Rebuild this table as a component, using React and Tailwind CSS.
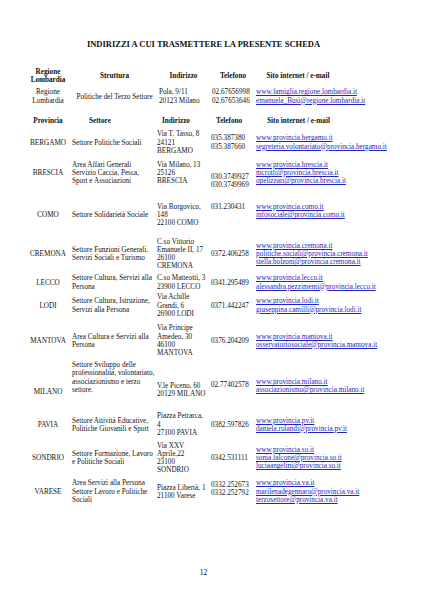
import React from 'react'

// Pagina 12: indirizzi delle province lombarde a cui trasmettere la scheda.
const GRID = 'grid grid-cols-[48px_85px_53px_46px_1fr] items-center'
const LINK = 'text-[#2424c4] underline decoration-[0.5px] underline-offset-[1px]'

const ROWS = [
  {
    mt: 'mt-[5.2px]', h: 'h-[24.6px]', prov: 'BERGAMO',
    settore: ['Settore Politiche Sociali'],
    addr: ['Via T. Tasso, 8', '24121', 'BERGAMO'],
    tel: ['035.387380', '035.387660'],
    web: ['www.provincia.bergamo.it', 'segreteria.volontariato@provincia.bergamo.it'],
  },
  {
    mt: 'mt-[1.9px]', h: 'h-[24.6px]', prov: 'BRESCIA',
    settore: ['Area Affari Generali', 'Servizio Caccia, Pesca,', 'Sport e Associazioni'],
    addr: ['Via Milano, 13', '25126', 'BRESCIA'],
    tel: ['030.3749927', '030.3749969'], telCls: 'pt-[16px]',
    web: ['www.provincia.brescia.it', 'mcrotti@provincia.brescia.it', 'opelizzari@provincia.brescia.it'],
  },
  {
    mt: 'mt-[21.6px]', h: 'h-[24.6px]', prov: 'COMO',
    settore: ['Settore Solidarietà Sociale'],
    addr: ['Via Borgovico,', '148', '22100 COMO'],
    tel: ['031.230431'], telCls: 'self-start',
    web: ['www.provincia.como.it', 'infosociale@provincia.como.it'], webCls: 'self-start',
  },
  {
    mt: 'mt-[10.1px]', h: 'h-[32.8px]', prov: 'CREMONA',
    settore: ['Settore Funzioni Generali,', 'Servizi Sociali e Turismo'],
    addr: ['C.so Vittorio', 'Emanuele II, 17', '26100', 'CREMONA'],
    tel: ['0372.406258'],
    web: ['www.provincia.cremona.it', 'politiche.sociali@provincia.cremona.it', 'stella.bolzoni@provincia.cremona.it'],
  },
  {
    mt: 'mt-[3.9px]', h: 'h-[16.4px]', prov: 'LECCO',
    settore: ['Settore Cultura, Servizi alla', 'Persona'],
    addr: ['C.so Matteotti, 3', '23900 LECCO'],
    tel: ['0341.295489'],
    web: ['www.provincia.lecco.it', 'alessandra.pezzimenti@provincia.lecco.it'],
  },
  {
    mt: 'mt-[2.5px]', h: 'h-[24.6px]', prov: 'LODI',
    settore: ['Settore Cultura, Istruzione,', 'Servizi alla Persona'],
    addr: ['Via Achille', 'Grandi, 6', '26900 LODI'],
    tel: ['0371.442247'],
    web: ['www.provincia.lodi.it', 'giuseppina.camilli@provincia.lodi.it'],
  },
  {
    mt: 'mt-[6.5px]', h: 'h-[32.8px]', prov: 'MANTOVA',
    settore: ['Area Cultura e Servizi alla', 'Persona'],
    addr: ['Via Principe', 'Amedeo, 30', '46100', 'MANTOVA'],
    tel: ['0376.204209'],
    web: ['www.provincia.mantova.it', 'osservatoriosociale@provincia.mantova.it'],
  },
  {
    mt: 'mt-[4px]', h: 'h-[37px]', prov: 'MILANO', provCls: 'pt-[24px]',
    settore: ['Settore Sviluppo delle', 'professionalità, volontariato,', 'associazionismo e terzo', 'settore.'],
    settoreCls: 'self-start',
    addr: ['V.le Piceno, 60', '20129 MILANO'], addrCls: 'pt-[21px]',
    tel: ['02.77402578'], telCls: 'pt-[11px]',
    web: ['www.provincia.milano.it', 'associazionismo@provincia.milano.it'], webCls: 'pt-[13px]',
  },
  {
    mt: 'mt-[14.3px]', h: 'h-[24.6px]', prov: 'PAVIA',
    settore: ['Settore Attività Educative,', 'Politiche Giovanili e Sport'],
    addr: ['Piazza Petrarca,', '4', '27100 PAVIA'],
    tel: ['0382.597826'],
    web: ['www.provincia.pv.it', 'daniela.rolandi@provincia.pv.it'],
  },
  {
    mt: 'mt-[4.6px]', h: 'h-[32.8px]', prov: 'SONDRIO',
    settore: ['Settore Formazione, Lavoro', 'e Politiche Sociali'],
    addr: ['Via XXV', 'Aprile,22', '23100', 'SONDRIO'],
    tel: ['0342.531111'],
    web: ['www.provincia.so.it', 'sonia.falcone@provincia.so.it', 'luciaangelini@provincia.so.it'],
  },
  {
    mt: 'mt-[5px]', h: 'h-[24.6px]', prov: 'VARESE',
    settore: ['Area Servizi alla Persona', 'Settore Lavoro e Politiche', 'Sociali'],
    addr: ['Piazza Libertà, 1', '21100 Varese'],
    tel: ['0332.252673', '0332.252792'], telCls: 'pb-[6px]',
    web: ['www.provincia.va.it', 'marilenadegennaro@provincia.va.it', 'terzosettore@provincia.va.it'],
  },
]

function Lines({ items, className = '', link }) {
  return (
    <div className={`whitespace-nowrap ${className}`}>
      {items.map((t) => (
        <div key={t} className={link ? LINK : ''}>{t}</div>
      ))}
    </div>
  )
}

export default function App() {
  return (
    <div className="min-h-[598px] w-[423px] bg-white pl-[24px] pt-[39px] [font-family:'Liberation_Serif',serif] text-[7.2px] leading-[8.2px] text-[#111]">
      <h1 className="w-[359px] text-center text-[8.5px] font-bold leading-[10px]">
        INDIRIZZI A CUI TRASMETTERE LA PRESENTE SCHEDA
      </h1>

      {/* tabella regione */}
      <div className={`${GRID} mt-[18.6px] h-[16.4px] font-bold`}>
        <div className="text-center">Regione<br />Lombardia</div>
        <div className="text-center">Struttura</div>
        <div className="text-center">Indirizzo</div>
        <div className="text-center">Telefono</div>
        <div className="w-[84px] text-center">Sito internet / e-mail</div>
      </div>
      <div className={`${GRID} mt-[4.5px] h-[16.4px]`}>
        <div className="text-center">Regione<br />Lombardia</div>
        <div className="whitespace-nowrap text-center">Politiche del Terzo Settore</div>
        <Lines className="pl-[2px]" items={['Pola, 9/11', '20123 Milano']} />
        <Lines className="pl-[2px]" items={['02.67656998', '02.67653646']} />
        <Lines link items={['www.famiglia.regione.lombardia.it', 'emanuela_Busi@regione.lombardia.it']} />
      </div>

      {/* tabella province */}
      <div className={`${GRID} mt-[11.3px] h-[9px] font-bold`}>
        <div className="text-center">Provincia</div>
        <div className="pl-[17px]">Settore</div>
        <div className="pl-[5px]">Indirizzo</div>
        <div className="pl-[6px]">Telefono</div>
        <div className="whitespace-nowrap pl-[11px]">Sito internet / e-mail</div>
      </div>
      {ROWS.map((r) => (
        <div key={r.prov} className={`${GRID} ${r.mt} ${r.h}`}>
          <div className={`text-center ${r.provCls || ''}`}>{r.prov}</div>
          <Lines className={r.settoreCls} items={r.settore} />
          <Lines className={r.addrCls} items={r.addr} />
          <Lines className={`pl-[1px] ${r.telCls || ''}`} items={r.tel} />
          <Lines link className={r.webCls} items={r.web} />
        </div>
      ))}

      <div className="mt-[64px] w-[359px] text-center text-[7.5px] leading-[9px]">12</div>
    </div>
  )
}
